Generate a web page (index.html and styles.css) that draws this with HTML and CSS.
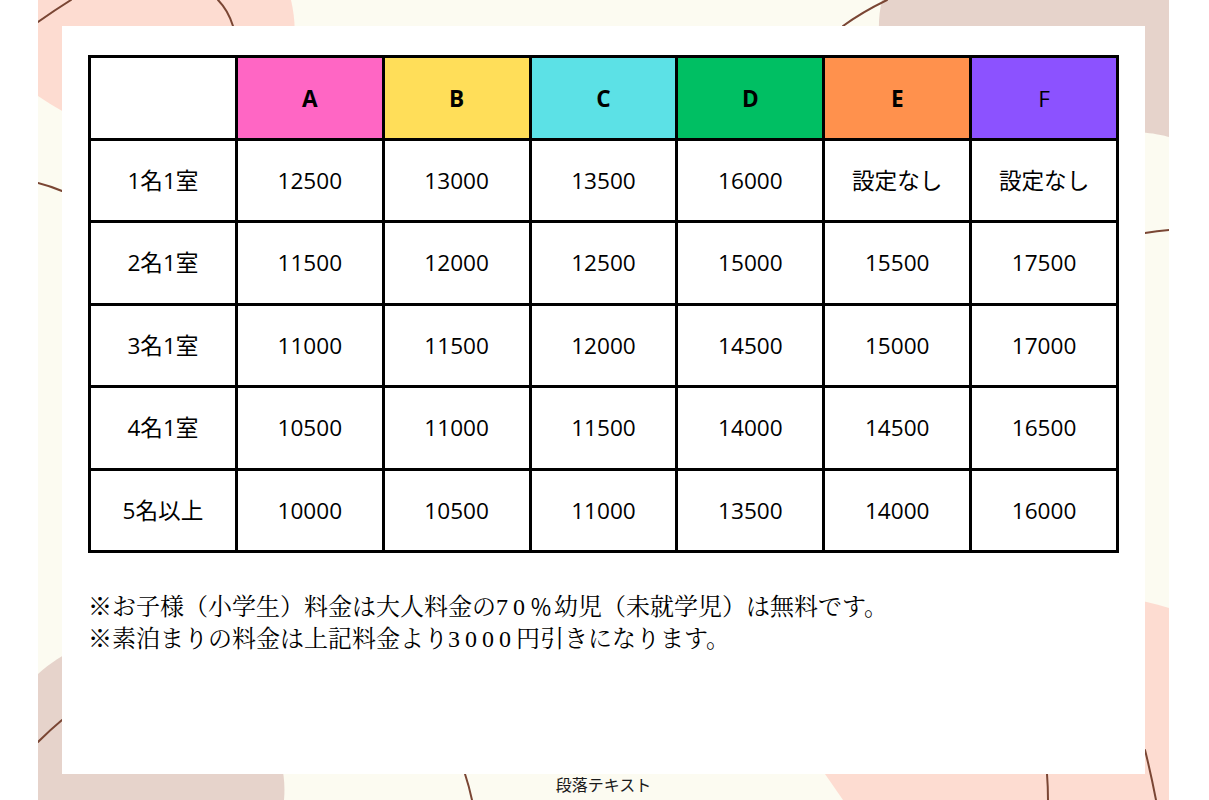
FILE: index.html
```html
<!DOCTYPE html>
<html lang="ja">
<head>
<meta charset="utf-8">
<title>料金表</title>
<link rel="stylesheet" href="styles.css">
</head>
<body>
<div class="stage">
  <svg class="backdrop" width="1131" height="800" viewBox="38 0 1131 800" aria-hidden="true">
    <path class="pink" d="M38 0 H291 C300 40 300 100 200 130 C130 145 80 125 38 96 Z"/>
    <path class="mauve" d="M882 0 H1169 V137 C1150 131 1100 126 1000 138 C900 128 868 60 882 0 Z"/>
    <path class="mauve" d="M38 674 C80 636 150 616 220 672 C265 712 288 755 284 800 H38 Z"/>
    <path class="pink" d="M825 774 C855 650 1010 560 1169 608 V800 H843 Z"/>
    <path class="line" d="M38 22 Q55 10 71 0"/>
    <path class="line" d="M218 0 Q228 10 233 26"/>
    <path class="line" d="M38 183 Q50 186 62 191"/>
    <path class="line" d="M887 0 Q862 12 843 26"/>
    <path class="line" d="M1145 233 Q1157 231 1169 230"/>
    <path class="line" d="M38 742 Q50 730 62 720"/>
    <path class="line" d="M465 774 Q469 786 472 800"/>
    <path class="line" d="M1047 774 Q1048 787 1048 800"/>
    <path class="line" d="M1145 750 Q1151 774 1156 800"/>
  </svg>

  <main class="card">
    <div class="rate-grid">
      <div class="cell"></div>
      <div class="cell head a">A</div>
      <div class="cell head b">B</div>
      <div class="cell head c">C</div>
      <div class="cell head d">D</div>
      <div class="cell head e">E</div>
      <div class="cell head f">F</div>

      <div class="cell">1名1室</div>
      <div class="cell">12500</div>
      <div class="cell">13000</div>
      <div class="cell">13500</div>
      <div class="cell">16000</div>
      <div class="cell">設定なし</div>
      <div class="cell">設定なし</div>

      <div class="cell">2名1室</div>
      <div class="cell">11500</div>
      <div class="cell">12000</div>
      <div class="cell">12500</div>
      <div class="cell">15000</div>
      <div class="cell">15500</div>
      <div class="cell">17500</div>

      <div class="cell">3名1室</div>
      <div class="cell">11000</div>
      <div class="cell">11500</div>
      <div class="cell">12000</div>
      <div class="cell">14500</div>
      <div class="cell">15000</div>
      <div class="cell">17000</div>

      <div class="cell">4名1室</div>
      <div class="cell">10500</div>
      <div class="cell">11000</div>
      <div class="cell">11500</div>
      <div class="cell">14000</div>
      <div class="cell">14500</div>
      <div class="cell">16500</div>

      <div class="cell">5名以上</div>
      <div class="cell">10000</div>
      <div class="cell">10500</div>
      <div class="cell">11000</div>
      <div class="cell">13500</div>
      <div class="cell">14000</div>
      <div class="cell">16000</div>
    </div>

    <div class="notes">
      <p>※お子様（小学生）料金は大人料金の<span class="num">70</span><span class="pct">％</span>幼児（未就学児）は無料です。</p>
      <p>※素泊まりの料金は上記料金より<span class="num">3000</span>円引きになります。</p>
    </div>
  </main>

  <div class="caption">段落テキスト</div>
</div>
</body>
</html>
```

FILE: styles.css
```css
html, body {
  margin: 0;
  padding: 0;
  background: #ffffff;
}

.stage {
  position: relative;
  width: 1131px;
  height: 800px;
  margin-left: 38px;
  background: #fcfbf1;
  overflow: hidden;
  display: flex;
  flex-direction: column;
  align-items: flex-start;
}

.backdrop {
  position: absolute;
  left: 0;
  top: 0;
  z-index: 0;
}

.pink { fill: #fddcd1; }
.mauve { fill: #e6d3cb; }
.line {
  fill: none;
  stroke: #7a4634;
  stroke-width: 2;
  stroke-linecap: round;
}

.card {
  position: relative;
  z-index: 1;
  box-sizing: border-box;
  width: 1083px;
  height: 748px;
  margin: 26px 0 0 24px;
  padding: 29px 0 0 26px;
  background: #ffffff;
}

.rate-grid {
  box-sizing: border-box;
  width: 1031px;
  height: 498px;
  padding: 3px;
  background: #000000;
  display: grid;
  grid-template-columns: repeat(7, 1fr);
  grid-template-rows: repeat(6, 1fr);
  gap: 3px;
}

.cell {
  background: #ffffff;
  display: flex;
  align-items: center;
  justify-content: center;
  padding-top: 2px;
  font-family: "Open Sans", "Noto Sans CJK JP", sans-serif;
  font-size: 22.6px;
  color: #000000;
  line-height: 1;
}

.head {
  font-weight: 700;
  padding-top: 4px;
}
.head.f { font-weight: 400; }

.a { background: #ff66c4; }
.b { background: #ffde59; }
.c { background: #5ce1e6; }
.d { background: #00bf63; }
.e { background: #ff914d; }
.f { background: #8c52ff; }

.notes {
  margin-top: 36px;
  font-family: "Liberation Serif", "Noto Serif CJK JP", "Noto Sans CJK JP", serif;
  font-size: 24px;
  line-height: 32px;
  color: #000000;
}

.notes p {
  margin: 0;
  white-space: nowrap;
}

.num {
  letter-spacing: 5px;
}

.pct {
  font-family: "Noto Sans CJK JP", sans-serif;
  font-size: 22px;
  margin-right: 2px;
}

.caption {
  position: relative;
  z-index: 1;
  align-self: center;
  height: 26px;
  line-height: 20px;
  font-family: "Noto Sans CJK JP", sans-serif;
  font-size: 16px;
  color: #1a1a1a;
}
```
